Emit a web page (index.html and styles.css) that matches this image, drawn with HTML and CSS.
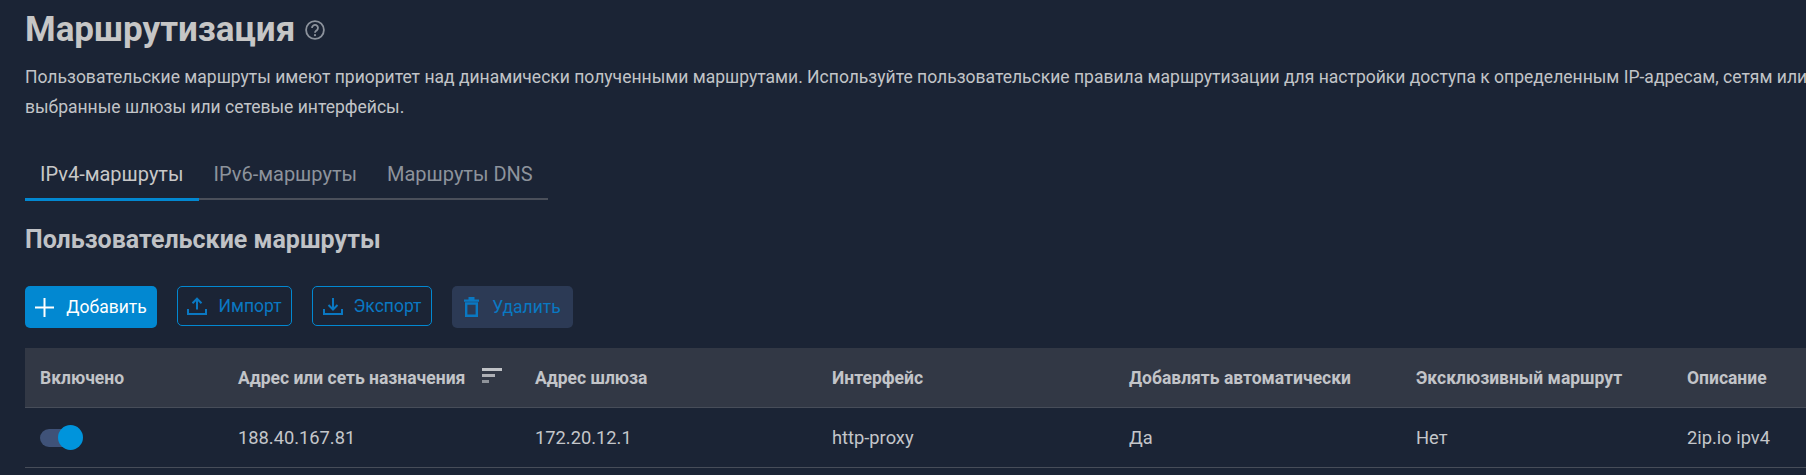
FILE: index.html
```html
<!DOCTYPE html>
<html lang="ru">
<head>
<meta charset="utf-8">
<title>Маршрутизация</title>
<link rel="stylesheet" href="styles.css">
</head>
<body>
<main class="page">
  <header class="title-row">
    <h1 class="title">Маршрутизация</h1>
    <svg class="help" viewBox="0 0 20 20" width="20" height="20" fill="none" stroke="currentColor">
      <circle cx="10" cy="10" r="8.9" stroke-width="1.8"/>
      <path d="M7 8a3 3 0 1 1 4.9 2.2c-1.1.9-1.9 1.3-1.9 2.6" stroke-width="1.8"/>
      <circle cx="10" cy="15.2" r="1.1" fill="currentColor" stroke="none"/>
    </svg>
  </header>
  <p class="desc">Пользовательские маршруты имеют приоритет над динамически полученными маршрутами. Используйте пользовательские правила маршрутизации для настройки доступа к определенным IP-адресам, сетям или<br>выбранные шлюзы или сетевые интерфейсы.</p>
  <nav class="tabs">
    <a class="tab tab-active">IPv4-маршруты</a>
    <a class="tab">IPv6-маршруты</a>
    <a class="tab">Маршруты DNS</a>
  </nav>
  <h2 class="section">Пользовательские маршруты</h2>
  <div class="toolbar">
    <button class="btn btn-primary">
      <svg class="ico-plus" viewBox="0 0 19 19" fill="none" stroke="currentColor" stroke-width="2"><path d="M9.5 0v19M0 9.5h19"/></svg>Добавить
    </button>
    <button class="btn btn-outline">
      <svg class="ico" viewBox="0 0 20 18" fill="none" stroke="currentColor" stroke-width="2"><path d="M10 12.5V2M5.5 6.2 10 1.7l4.5 4.5M1 12v5h18v-5"/></svg>Импорт
    </button>
    <button class="btn btn-outline">
      <svg class="ico" viewBox="0 0 20 18" fill="none" stroke="currentColor" stroke-width="2"><path d="M10 1v11M5.5 8l4.5 4.5L14.5 8M1 12v5h18v-5"/></svg>Экспорт
    </button>
    <button class="btn btn-disabled">
      <svg class="ico-trash" viewBox="0 0 15 20" fill="none" stroke="currentColor" stroke-width="2.4"><path d="M2.2 6.5h10.6v12.3H2.2zM0 3.6h15M4.5 1.2h6"/></svg>Удалить
    </button>
  </div>
  <div class="table">
    <div class="row row-head">
      <div class="cell">Включено</div>
      <div class="cell cell-sort">Адрес или сеть назначения
        <svg class="sort" viewBox="0 0 20 15"><rect class="bar-1" width="20" height="3"/><rect class="bar-2" y="6" width="13" height="3"/><rect class="bar-3" y="12" width="7" height="3"/></svg>
      </div>
      <div class="cell">Адрес шлюза</div>
      <div class="cell">Интерфейс</div>
      <div class="cell">Добавлять автоматически</div>
      <div class="cell">Эксклюзивный маршрут</div>
      <div class="cell">Описание</div>
    </div>
    <div class="row row-body">
      <div class="cell"><span class="switch"><span class="knob"></span></span></div>
      <div class="cell">188.40.167.81</div>
      <div class="cell">172.20.12.1</div>
      <div class="cell">http-proxy</div>
      <div class="cell">Да</div>
      <div class="cell">Нет</div>
      <div class="cell">2ip.io ipv4</div>
    </div>
  </div>
</main>
</body>
</html>
```

FILE: styles.css
```css
html, body { margin: 0; padding: 0; background: #1b2435; overflow: hidden; }
body { font-family: Roboto, "Liberation Sans", sans-serif; color: #c4c4c4; }
.page { padding: 9px 0 0 25px; width: 1781px; height: 466px; overflow: hidden; }
.title-row { display: flex; align-items: center; gap: 10px; height: 42px; }
.title { margin: 0; font-size: 35px; line-height: 42px; font-weight: 700; color: #c6c6c6; }
.help { color: #8c929c; }
.desc { margin: 11px 0 0; font-size: 17.53px; line-height: 30px; white-space: nowrap; color: #c2c4c8; }
.tabs { display: flex; width: 523px; margin-top: 30px; border-bottom: 2px solid #4a4f5a; height: 46px; white-space: nowrap; }
.tab { padding: 0 15px; font-size: 20px; line-height: 44px; color: #8d939c; height: 46px; }
.tab-active { color: #c8c8c8; border-bottom: 3px solid #0288d1; margin-bottom: -3px; }
.section { margin: 25px 0 0; font-size: 25px; line-height: 30px; font-weight: 700; color: #c0c2c6; }
.toolbar { display: flex; align-items: flex-start; gap: 20px; margin-top: 31px; }
.btn { display: flex; align-items: center; justify-content: center; gap: 11px; box-sizing: border-box; height: 42px; font: 400 17.5px/20px Roboto, sans-serif; border-radius: 5px; padding: 0; border: 0; }
.btn-primary { width: 132px; gap: 12px; background: #0288d1; color: #fff; }
.btn-outline { height: 40px; background: transparent; border: 1px solid #0288d1; color: #0a78c2; }
.btn-outline:nth-child(2) { width: 115px; }
.btn-outline:nth-child(3) { width: 120px; }
.btn-disabled { width: 121px; gap: 13px; background: #2c3a55; color: #0a78c2; }
.ico { width: 20px; height: 18px; flex: none; }
.ico-plus { width: 19px; height: 19px; flex: none; }
.ico-trash { width: 15px; height: 20px; flex: none; }
.table { margin-top: 20px; }
.row { display: grid; grid-template-columns: 198px 297px 297px 297px 287px 271px 1fr; height: 60px; align-items: center; border-bottom: 1px solid #474d59; box-sizing: border-box; padding-left: 15px; color: #c4c6ca; }
.row-head { background: #323845; font-size: 17.5px; font-weight: 700; color: #c2c4c8; }
.row-body { font-size: 18.3px; }
.cell { display: flex; align-items: center; white-space: nowrap; }
.cell-sort { gap: 17px; }
.sort { width: 20px; height: 15px; margin-top: -4px; }
.bar-1 { fill: #c0c2c6; }
.bar-2 { fill: #aeb0b5; }
.bar-3 { fill: #8f939a; }
.switch { position: relative; display: block; width: 32px; height: 18px; border-radius: 9px; background: #3f5278; }
.knob { position: absolute; left: 18px; top: -4px; width: 25px; height: 25px; border-radius: 50%; background: #0094dc; }
```
